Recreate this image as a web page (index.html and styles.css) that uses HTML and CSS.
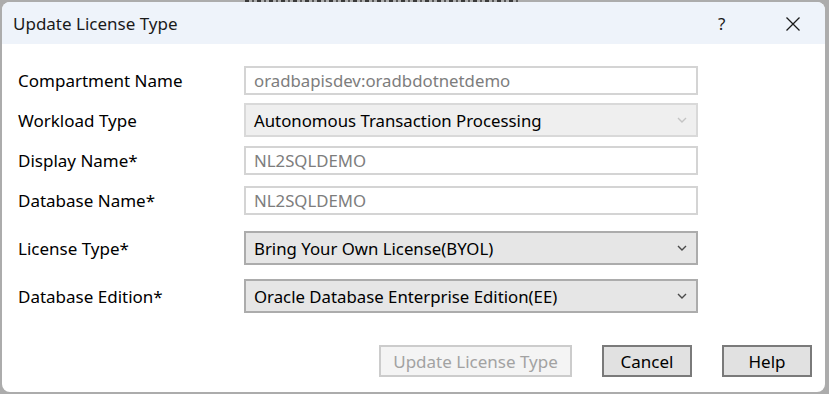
FILE: index.html
```html
<!DOCTYPE html>
<html lang="en">
<head>
    <meta charset="UTF-8">
    <title>Update License Type</title>
    <link rel="stylesheet" href="styles.css">
</head>
<body>
    <div class="backdrop-strip"></div>
    <div class="dialog">
        <div class="title-bar">
            <span class="title">Update License Type</span>
            <span class="title-help">?</span>
            <span class="title-close">
                <svg width="16" height="16" viewBox="0 0 16 16"><path d="M1.5 1.5 L14.5 14.5 M14.5 1.5 L1.5 14.5" stroke="#1a1a1a" stroke-width="1.3" fill="none"/></svg>
            </span>
        </div>
        <div class="form">
            <div class="row row-compartment">
                <label>Compartment Name</label>
                <div class="field text-field readonly">oradbapisdev:oradbdotnetdemo</div>
            </div>
            <div class="row row-workload">
                <label>Workload Type</label>
                <div class="field combo disabled">
                    <span>Autonomous Transaction Processing</span>
                    <svg class="chevron" width="10" height="6" viewBox="0 0 10 6"><path d="M1 1 L5 5 L9 1" stroke="#c4c4c4" stroke-width="1.4" fill="none"/></svg>
                </div>
            </div>
            <div class="row row-display">
                <label>Display Name*</label>
                <div class="field text-field readonly">NL2SQLDEMO</div>
            </div>
            <div class="row row-dbname">
                <label>Database Name*</label>
                <div class="field text-field readonly">NL2SQLDEMO</div>
            </div>
            <div class="row row-license">
                <label>License Type*</label>
                <div class="field combo">
                    <span>Bring Your Own License(BYOL)</span>
                    <svg class="chevron" width="10" height="6" viewBox="0 0 10 6"><path d="M1 1 L5 5 L9 1" stroke="#4a4a4a" stroke-width="1.4" fill="none"/></svg>
                </div>
            </div>
            <div class="row row-edition">
                <label>Database Edition*</label>
                <div class="field combo">
                    <span>Oracle Database Enterprise Edition(EE)</span>
                    <svg class="chevron" width="10" height="6" viewBox="0 0 10 6"><path d="M1 1 L5 5 L9 1" stroke="#4a4a4a" stroke-width="1.4" fill="none"/></svg>
                </div>
            </div>
        </div>
        <div class="buttons">
            <button class="btn btn-update" disabled>Update License Type</button>
            <button class="btn btn-cancel">Cancel</button>
            <button class="btn btn-help">Help</button>
        </div>
    </div>
</body>
</html>
```

FILE: styles.css
```css
body, html {
    margin: 0;
    padding: 0;
    font-family: "Noto Sans", "Open Sans", sans-serif;
    background-color: #acacac;
    overflow: hidden;
}
/* bit of the window behind the dialog peeking out at the top */
.backdrop-strip {
    position: absolute;
    left: 245px;
    top: 0;
    width: 275px;
    height: 2px;
    background: repeating-linear-gradient(90deg, #3a3a3a 0 4px, #acacac 4px 7px, #555555 7px 9px, #acacac 9px 12px);
}
.dialog {
    position: relative;
    margin: 2px 0 0 2px;
    width: 823px;
    height: 390px;
    background-color: #ffffff;
    border-radius: 8px;
    overflow: hidden;
}
.title-bar {
    display: flex;
    align-items: center;
    height: 42px;
    background-color: #eef3fa;
    padding-left: 11px;
    color: #1a1a1a;
}
.title {
    font-size: 17px;
    flex-grow: 1;
}
.title-help {
    font-size: 17px;
    width: 67px;
}
.title-close {
    display: flex;
    width: 40px;
    margin-top: 1px;
}
.form {
    display: flex;
    flex-direction: column;
    padding: 22px 0 0 16px;
}
.row {
    display: flex;
    align-items: center;
}
.row label {
    width: 226px;
    font-size: 17px;
    color: #000000;
}
.row-workload { margin-top: 8px; }
.row-display { margin-top: 9px; }
.row-dbname { margin-top: 11px; }
.row-license { margin-top: 16px; }
.row-edition { margin-top: 14px; }
.field {
    box-sizing: border-box;
    width: 454px;
    display: flex;
    align-items: center;
    padding-left: 8px;
    font-size: 16.8px;
}
.text-field {
    height: 29px;
    border: 2px solid #d4d4d4;
    background-color: #ffffff;
}
.text-field.readonly {
    color: #7d7d7d;
}
.combo {
    height: 34px;
    justify-content: space-between;
    padding-right: 9px;
    border: 2px solid #acacac;
    background-color: #e6e6e6;
    color: #000000;
}
.combo.disabled {
    border-color: #d9d9d9;
    background-color: #efefef;
}
.buttons {
    display: flex;
    justify-content: flex-end;
    gap: 30px;
    padding: 32px 13px 0 0;
}
.btn {
    box-sizing: border-box;
    height: 32px;
    font-family: "Noto Sans", "Open Sans", sans-serif;
    font-size: 17px;
    padding: 0;
    border: 2px solid #7a7a7a;
    background-color: #e1e1e1;
    color: #000000;
}
.btn-update {
    width: 193px;
    border-color: #cccccc;
    background-color: #f4f4f4;
    color: #a2a2a2;
}
.btn-cancel {
    width: 90px;
}
.btn-help {
    width: 90px;
}
```
